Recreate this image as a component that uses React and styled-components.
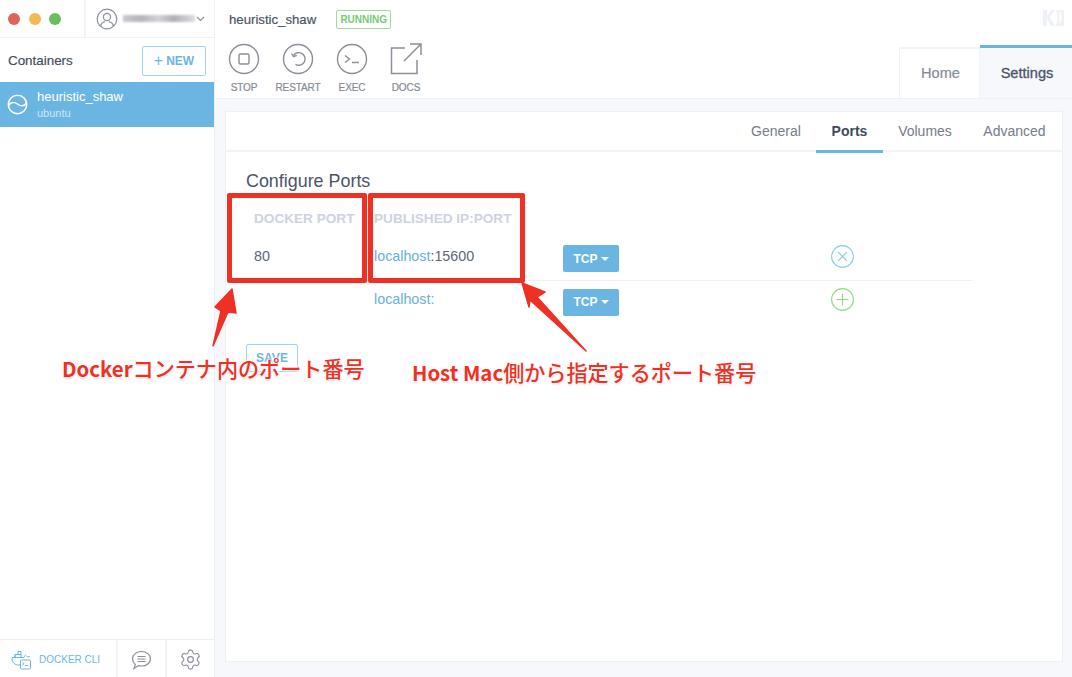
import React from "react";
import styled, { createGlobalStyle } from "styled-components";
import { Settings as Gear } from "lucide-react";

const Global = createGlobalStyle`
  html, body { margin: 0; padding: 0; height: 100%; background: #fff; }
  body { font-family: "Liberation Sans", Arial, sans-serif; -webkit-font-smoothing: antialiased; }
  * { box-sizing: border-box; }
`;

const Page = styled.div`
  position: relative;
  display: flex;
  width: 1072px;
  height: 677px;
  overflow: hidden;
  background: #f6f8fc;
`;

const Sidebar = styled.aside`
  width: 215px;
  flex: none;
  display: flex;
  flex-direction: column;
  background: #fff;
  border-right: 1px solid #eef0f5;
`;

const TopBar = styled.div`
  height: 38px;
  display: flex;
  border-bottom: 1px solid #f0f2f7;
`;

const Lights = styled.div`
  width: 86px;
  display: flex;
  align-items: center;
  gap: 8.5px;
  padding: 0 0 0 8px;
  border-right: 2px solid #f1f3f8;
`;

const Light = styled.span`
  width: 12px;
  height: 12px;
  border-radius: 50%;
  background: ${p => p.$c};
`;

const Account = styled.div`
  flex: 1;
  display: flex;
  align-items: center;
  padding-left: 10px;
  color: #8b8f99;
`;

const Blur = styled.span`
  width: 72px;
  height: 7px;
  margin-left: 5px;
  background: linear-gradient(90deg, #c9cad0, #b4b5bb 25%, #d2d3d8 50%, #aeb0b6 70%, #dcdde1);
  filter: blur(1.2px);
`;

const ListHeader = styled.div`
  height: 44px;
  display: flex;
  align-items: center;
  justify-content: space-between;
  padding: 0 8px 0 8px;
`;

const ListTitle = styled.div`
  font-size: 13.4px;
  color: #3f4a5c;
  -webkit-text-stroke: 0.15px #3f4a5c;
`;

const NewButton = styled.button`
  width: 64px;
  height: 30px;
  margin-top: 2px;
  padding: 0;
  display: flex;
  align-items: center;
  justify-content: center;
  gap: 3px;
  background: #fff;
  border: 1px solid #9fd2ee;
  border-radius: 2px;
  color: #6cb6e3;
  font: bold 12px "Liberation Sans", sans-serif;
`;

const PlusMark = styled.span`
  font-weight: normal;
  font-size: 16px;
  line-height: 14px;
`;

const ContainerItem = styled.div`
  height: 45px;
  display: flex;
  align-items: center;
  gap: 9px;
  padding-left: 7px;
  background: #6bb5e3;
  color: #fff;
`;

const ItemText = styled.div`
  display: flex;
  flex-direction: column;
  gap: 3px;
  margin-top: -1px;
`;

const ItemName = styled.div`
  font-size: 13px;
  line-height: 15px;
`;

const ItemImage = styled.div`
  font-size: 11px;
  line-height: 13px;
  color: #cfe6f6;
`;

const Spacer = styled.div`
  flex: 1;
`;

const Footer = styled.div`
  height: 38px;
  display: flex;
  border-top: 1px solid #eef0f5;
`;

const CliButton = styled.div`
  width: 118px;
  display: flex;
  align-items: center;
  gap: 7px;
  padding: 2px 0 0 11px;
  color: #6cb6e3;
  font-size: 10px;
  border-right: 2px solid #f1f3f8;
`;

const FooterIcon = styled.div`
  flex: 1;
  display: flex;
  align-items: center;
  justify-content: center;
  padding-top: 2px;
  color: #8a8e98;
  border-right: ${p => (p.$divide ? "2px solid #f1f3f8" : "none")};
`;

const Main = styled.main`
  flex: 1;
  display: flex;
  flex-direction: column;
  min-width: 0;
`;

const Header = styled.header`
  height: 99px;
  flex: none;
  display: flex;
  justify-content: space-between;
  background: #fff;
  border-bottom: 1px solid #eef0f5;
`;

const HeaderLeft = styled.div`
  padding: 10px 0 0 14px;
`;

const TitleRow = styled.div`
  display: flex;
  align-items: center;
  gap: 20px;
  height: 19px;
`;

const Title = styled.div`
  font-size: 13.2px;
  color: #4a5568;
  -webkit-text-stroke: 0.2px #4a5568;
`;

const Badge = styled.div`
  width: 55px;
  height: 19px;
  display: flex;
  align-items: center;
  justify-content: center;
  border: 1px solid #9fdc9c;
  border-radius: 2px;
  color: #76cb72;
  font-size: 10px;
  font-weight: bold;
`;

const Actions = styled.div`
  display: flex;
  margin-top: 14px;
  margin-left: -12px;
`;

const Action = styled.div`
  width: 54px;
  display: flex;
  flex-direction: column;
  align-items: center;
  gap: 7px;
  color: #8a8f9a;
  font-size: 10px;
`;

const ActionLabel = styled.div`
  line-height: 12px;
  letter-spacing: -0.1px;
  color: #858a95;
  -webkit-text-stroke: 0.2px #858a95;
`;

const HeaderRight = styled.div`
  display: flex;
  flex-direction: column;
  align-items: flex-end;
`;

const Logo = styled.div`
  height: 45px;
  padding: 10px 8px 0 0;
`;

const TabStrip = styled.div`
  display: flex;
  height: 54px;
`;

const TopTab = styled.div`
  display: flex;
  align-items: center;
  justify-content: center;
  padding-left: 2px;
  font-size: 14.6px;
  width: ${p => (p.$active ? "92px" : "81px")};
  color: ${p => (p.$active ? "#4b5566" : "#858b96")};
  background: ${p => (p.$active ? "#f6f8fc" : "#fff")};
  border-top: ${p => (p.$active ? "3px solid #6bb5e3" : "2px solid #f1f3f8")};
  border-left: ${p => (p.$active ? "none" : "1px solid #f1f3f8")};
  border-right: ${p => (p.$active ? "none" : "1px solid #f1f3f8")};
  margin-top: ${p => (p.$active ? "0" : "2px")};
  -webkit-text-stroke: ${p => (p.$active ? "0.3px #4b5566" : "0.2px #858b96")};
`;

const Body = styled.div`
  flex: 1;
  padding: 12px 9px 15px 10px;
`;

const Card = styled.section`
  height: 100%;
  background: #fff;
  border: 1px solid #eef0f5;
`;

const SubTabs = styled.nav`
  height: 40px;
  display: flex;
  justify-content: flex-end;
  border-bottom: 2px solid #f1f3f8;
`;

const SubTab = styled.div`
  height: 41px;
  width: ${p => p.$w}px;
  display: flex;
  align-items: center;
  justify-content: center;
  padding-bottom: ${p => (p.$active ? "1px" : "4px")};
  font-size: 14px;
  color: ${p => (p.$active ? "#3f4a5c" : "#767c88")};
  font-weight: ${p => (p.$active ? "bold" : "normal")};
  border-bottom: ${p => (p.$active ? "3px solid #6bb5e3" : "none")};
`;

const Content = styled.div`
  padding: 20px 0 0 20px;
  width: 747px;
`;

const Heading = styled.h2`
  margin: 0 0 8px;
  font-size: 17.9px;
  font-weight: normal;
  line-height: 19px;
  color: #4a5568;
`;

const Row = styled.div`
  display: grid;
  grid-template-columns: 128px 189px 268px 30px;
  align-items: center;
  height: ${p => p.$h}px;
  border-bottom: ${p => (p.$rule ? "1px solid #eef1f6" : "none")};
`;

const ColHead = styled.div`
  font-size: 13.6px;
  font-weight: bold;
  color: #cdd3de;
  white-space: nowrap;
`;

const DockerCol = styled.div`
  padding-left: 8px;
`;

const PortText = styled.div`
  margin-bottom: 6px;
  font-size: 14.3px;
  color: #5d6675;
`;

const Host = styled.span`
  color: #63b1e2;
`;

const TcpButton = styled.div`
  width: 56px;
  height: 27px;
  display: flex;
  align-items: center;
  justify-content: center;
  gap: 3px;
  background: #6bb5e3;
  border-radius: 2px;
  color: #fff;
  font-size: 12px;
  font-weight: bold;
`;

const Caret = styled.span`
  width: 0;
  height: 0;
  border-left: 4px solid transparent;
  border-right: 4px solid transparent;
  border-top: 4px solid #fff;
`;

const RowIcon = styled.svg`
  margin-bottom: 5px;
`;

const SaveButton = styled.div`
  width: 52px;
  height: 28px;
  margin-top: 21px;
  display: flex;
  align-items: center;
  justify-content: center;
  border: 1px solid #9fd2ee;
  border-radius: 2px;
  color: #6cb6e3;
  font-size: 12px;
  font-weight: bold;
`;

const RedBox = styled.div`
  position: absolute;
  left: ${p => p.$x}px;
  top: 193px;
  width: ${p => p.$w}px;
  height: 90px;
  border: 5px solid #ee3124;
  border-radius: 2px;
`;

const Overlay = styled.svg`
  position: absolute;
  left: 0;
  top: 0;
  pointer-events: none;
`;

const Note = styled.div`
  position: absolute;
  left: ${p => p.$x}px;
  top: ${p => p.$y}px;
  font-family: "Noto Sans CJK JP", "Liberation Sans", sans-serif;
  font-size: 21.1px;
  font-weight: 500;
  line-height: 26px;
  color: #ee3124;
  white-space: nowrap;
  text-shadow: 0 0 3px #fff, 0 0 3px #fff, 0 0 3px #fff, 0 1px 2px #bbb;
`;

const Latin = styled.span`
  font-size: 20.4px;
  font-weight: 700;
`;

const CircleIcon = ({ children }) => (
  <svg width="32" height="32" viewBox="0 0 32 32" fill="none" stroke="currentColor" strokeWidth="1.4">
    <circle cx="16" cy="16" r="14.5" />
    {children}
  </svg>
);

const App = () => (
  <>
    <Global />
    <Page>
      <Sidebar>
        <TopBar>
          <Lights>
            <Light $c="#e2625a" />
            <Light $c="#f1bb4f" />
            <Light $c="#68bf5c" />
          </Lights>
          <Account>
            <svg width="22" height="22" viewBox="0 0 22 22" fill="none" stroke="currentColor" strokeWidth="1.2">
              <circle cx="11" cy="11" r="9.8" />
              <circle cx="11" cy="9" r="3.6" />
              <path d="M4.6 18c.6-2.8 2.6-4 4.4-4.4M17.4 18c-.6-2.8-2.6-4-4.4-4.4" />
            </svg>
            <Blur />
            <svg width="9" height="6" viewBox="0 0 9 6" fill="none" stroke="#8b8f99" strokeWidth="1.1" style={{ marginLeft: 1 }}>
              <path d="M1 1l3.5 3.5L8 1" />
            </svg>
          </Account>
        </TopBar>
        <ListHeader>
          <ListTitle>Containers</ListTitle>
          <NewButton><PlusMark>+</PlusMark>NEW</NewButton>
        </ListHeader>
        <ContainerItem>
          <svg width="21" height="21" viewBox="0 0 21 21" fill="none" stroke="#fff" strokeWidth="1.6">
            <circle cx="10.5" cy="10.5" r="9.2" />
            <path d="M1.5 11.5C4 8 7.5 7.5 10.5 10s6.5 2.5 9-1" />
          </svg>
          <ItemText>
            <ItemName>heuristic_shaw</ItemName>
            <ItemImage>ubuntu</ItemImage>
          </ItemText>
        </ContainerItem>
        <Spacer />
        <Footer>
          <CliButton>
            <svg width="21" height="20" viewBox="0 0 21 20" fill="none" stroke="#6cb6e3" strokeWidth="1">
              <path d="M1 7.5h3v-3h3v-3h3v3h-3M4 4.5v3h6M10 4.5v3h3c1-2 2-3 2-3M15.5 6.5c1 .5 2.5.4 3.5-.2" />
              <path d="M1 8c0 4 2 6.5 5.5 7H9" />
              <rect x="9.5" y="10" width="10" height="9" rx="1" />
              <path d="M11.5 12.5l1.5 1.2-1.5 1.3M14 15.5h3" />
            </svg>
            DOCKER CLI
          </CliButton>
          <FooterIcon $divide>
            <svg width="21" height="20" viewBox="0 0 21 20" fill="none" stroke="currentColor" strokeWidth="1.2">
              <path d="M10.5 1.5c5 0 9 3.2 9 7.3s-4 7.2-9 7.2c-1 0-2-.1-2.9-.4L3 18.5l1.3-4C2.6 13 1.5 11 1.5 8.8c0-4.1 4-7.300 9-7.300z" />
              <path d="M6.5 6.500h8M6.500 9h8M6.500 11.500h8" />
            </svg>
          </FooterIcon>
          <FooterIcon>
            <Gear size={23} strokeWidth={1.2} />
          </FooterIcon>
        </Footer>
      </Sidebar>
      <Main>
        <Header>
          <HeaderLeft>
            <TitleRow>
              <Title>heuristic_shaw</Title>
              <Badge>RUNNING</Badge>
            </TitleRow>
            <Actions>
              <Action>
                <CircleIcon><rect x="11" y="11" width="10" height="10" rx="1.5" /></CircleIcon>
                <ActionLabel>STOP</ActionLabel>
              </Action>
              <Action>
                <CircleIcon>
                  <path d="M11.5 12.500a6.300 6.300 0 1 1 2 8.800" />
                  <path d="M9.500 10.500l2 3.200 3.200-1.400" />
                </CircleIcon>
                <ActionLabel>RESTART</ActionLabel>
              </Action>
              <Action>
                <CircleIcon><path d="M9 12.500l4.500 3.500L9 19.500M16 19.500h7" /></CircleIcon>
                <ActionLabel>EXEC</ActionLabel>
              </Action>
              <Action>
                <svg width="32" height="32" viewBox="0 0 32 32" fill="none" stroke="currentColor" strokeWidth="1.5">
                  <path d="M15 5H1.500v25.500H27V17M14 18L30.500 1.500M20 1h11v11" />
                </svg>
                <ActionLabel>DOCS</ActionLabel>
              </Action>
            </Actions>
          </HeaderLeft>
          <HeaderRight>
            <Logo>
              <svg width="21" height="16" viewBox="0 0 21 16" fill="#eef1f6">
                <path d="M0 0h4v6l4-6h3.500L7 7l5 9H8L4 9v7H0z" />
                <path d="M13 0h8v16h-8l2-8z" />
                <path d="M16.500 2.500h1.500l.5 5-1 6h-1z" fill="#fff" />
              </svg>
            </Logo>
            <TabStrip>
              <TopTab>Home</TopTab>
              <TopTab $active>Settings</TopTab>
            </TabStrip>
          </HeaderRight>
        </Header>
        <Body>
          <Card>
            <SubTabs>
              <SubTab $w={80}>General</SubTab>
              <SubTab $w={67} $active>Ports</SubTab>
              <SubTab $w={84}>Volumes</SubTab>
              <SubTab $w={95}>Advanced</SubTab>
            </SubTabs>
            <Content>
              <Heading>Configure Ports</Heading>
              <Row $h={38}>
                <DockerCol><ColHead>DOCKER PORT</ColHead></DockerCol>
                <ColHead>PUBLISHED IP:PORT</ColHead>
              </Row>
              <Row $h={44} $rule>
                <DockerCol><PortText>80</PortText></DockerCol>
                <PortText><Host>localhost</Host>:15600</PortText>
                <TcpButton>TCP <Caret /></TcpButton>
                <RowIcon width="23" height="23" viewBox="0 0 23 23" fill="none" stroke="#8ccbee" strokeWidth="1.1">
                  <circle cx="11.5" cy="11.5" r="10.9" />
                  <path d="M7 7l9 9M16 7l-9 9" />
                </RowIcon>
              </Row>
              <Row $h={42}>
                <div />
                <PortText><Host>localhost</Host><Host>:</Host></PortText>
                <TcpButton>TCP <Caret /></TcpButton>
                <RowIcon width="23" height="23" viewBox="0 0 23 23" fill="none" stroke="#8dd78a" strokeWidth="1.1">
                  <circle cx="11.5" cy="11.5" r="10.9" />
                  <path d="M11.500 5.500v12M5.500 11.500h12" />
                </RowIcon>
              </Row>
              <SaveButton>SAVE</SaveButton>
            </Content>
          </Card>
        </Body>
      </Main>
      <RedBox $x={227} $w={140} />
      <RedBox $x={368} $w={157} />
      <Overlay width="1072" height="677" viewBox="0 0 1072 677">
        <path d="M232 289L215 307L221 311L213 346L228 312L236 313Z" fill="#ee3124" stroke="#ee3124" strokeWidth="1.5" strokeLinejoin="round" />
        <path d="M522 283L529 307L530 300L586 351L537 297L545 292Z" fill="#ee3124" stroke="#ee3124" strokeWidth="1.5" strokeLinejoin="round" />
      </Overlay>
      <Note $x={62} $y={355}><Latin>Docker</Latin>コンテナ内のポート番号</Note>
      <Note $x={412} $y={359}><Latin>Host Mac</Latin>側から指定するポート番号</Note>
    </Page>
  </>
);

export default App;
